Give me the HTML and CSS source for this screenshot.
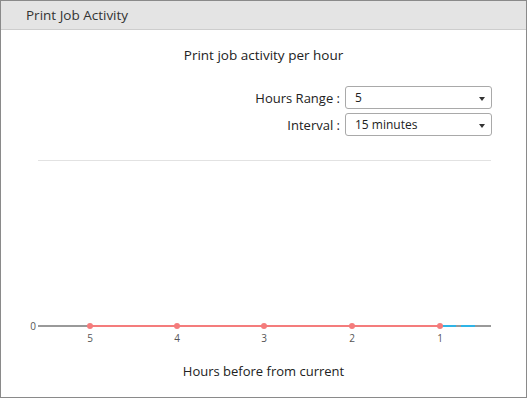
FILE: index.html
```html
<!DOCTYPE html>
<html>
<head>
    <title>Print Job Activity</title>
    <link rel="stylesheet" href="styles.css">
</head>
<body>
    <div class="panel">
        <div class="panel-header">Print Job Activity</div>

        <div class="panel-body">
            <div class="chart-title">Print job activity per hour</div>

            <div class="controls">
                <label>Hours Range :</label>
                <div class="select"><span>5</span><i class="caret"></i></div>
                <label>Interval :</label>
                <div class="select"><span>15 minutes</span><i class="caret"></i></div>
            </div>

            <div class="divider"></div>

            <svg class="chart" width="525" height="190" viewBox="0 0 525 190">
                <line x1="37" y1="165" x2="490" y2="165" stroke="#999" stroke-width="2"/>
                <text x="35" y="169" text-anchor="end" class="tick">0</text>
                <line x1="89" y1="165" x2="439" y2="165" stroke="#f47c7c" stroke-width="2"/>
                <line x1="441" y1="165" x2="475" y2="165" stroke="#2fb4e6" stroke-width="2" stroke-dasharray="14 5"/>
                <g fill="#f47c7c">
                    <circle cx="89" cy="165" r="3"/>
                    <circle cx="176" cy="165" r="3"/>
                    <circle cx="263" cy="165" r="3"/>
                    <circle cx="351" cy="165" r="3"/>
                    <circle cx="439" cy="165" r="3"/>
                </g>
                <g class="tick" text-anchor="middle">
                    <text x="89" y="181">5</text>
                    <text x="176" y="181">4</text>
                    <text x="263" y="181">3</text>
                    <text x="351" y="181">2</text>
                    <text x="439" y="181">1</text>
                </g>
            </svg>

            <div class="axis-title">Hours before from current</div>
        </div>
    </div>
</body>
</html>
```

FILE: styles.css
```css
body {
    margin: 0;
    font-family: 'Open Sans', 'Noto Sans', sans-serif;
    color: #222;
    background: white;
}

.panel {
    width: 527px;
    height: 398px;
    box-sizing: border-box;
    border: 1px solid #8a8a8a;
    overflow: hidden;
}

.panel-header {
    height: 28px;
    line-height: 28px;
    padding-left: 25px;
    background: #e4e4e4;
    border-bottom: 1px solid #cdcdcd;
    font-size: 13.5px;
    color: #333;
}

.panel-body {
    display: flex;
    flex-direction: column;
}

.chart-title {
    margin-top: 16px;
    text-align: center;
    font-size: 13.5px;
    line-height: 19px;
}

.controls {
    display: grid;
    grid-template-columns: auto 147px;
    justify-content: end;
    align-items: center;
    column-gap: 5px;
    row-gap: 4px;
    margin-top: 21px;
    padding-right: 34px;
    font-size: 13px;
}

.controls label {
    text-align: right;
}

.select {
    height: 23px;
    box-sizing: border-box;
    border: 1px solid #a9a9a9;
    border-radius: 3px;
    display: flex;
    align-items: center;
    justify-content: space-between;
    padding: 0 6px 0 9px;
    font-size: 12px;
}

.caret {
    width: 0;
    height: 0;
    border-left: 3.5px solid transparent;
    border-right: 3.5px solid transparent;
    border-top: 4px solid #333;
    margin-top: 2px;
}

.divider {
    height: 1px;
    background: #e2e2e2;
    margin: 24px 35px 0 37px;
}

.chart {
    display: block;
}

.tick {
    font-family: 'Open Sans', sans-serif;
    font-size: 10px;
    fill: #555;
}

.axis-title {
    margin-top: 11px;
    text-align: center;
    font-size: 13px;
    line-height: 18px;
}
```
